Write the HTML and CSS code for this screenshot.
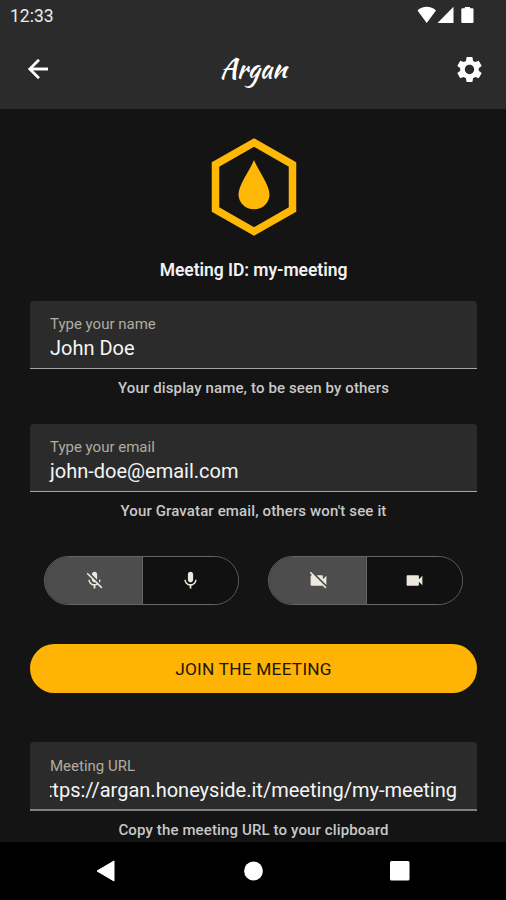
FILE: index.html
```html
<!DOCTYPE html>
<html lang="en">
<head>
<meta charset="utf-8">
<title>Argan</title>
<link rel="stylesheet" href="styles.css">
</head>
<body>
<div class="screen">
  <header class="top">
    <div class="status">
      <span class="clock">12:33</span>
      <svg class="indicators" width="58" height="20" viewBox="0 0 58 20" fill="#fff">
        <path d="M0.5 5.500C3 3 6.200 1.800 9.700 1.800S16.400 3 19 5.500L9.700 18Z"/>
        <path d="M20.500 18 36.500 1.800V18Z"/>
        <path d="M45.500 3.300H47.800V2H53V3.300H55.500Q56.500 3.300 56.500 4.500V17Q56.500 18 55.500 18H45.500Q44.300 18 44.300 17V4.500Q44.300 3.300 45.500 3.300Z"/>
      </svg>
    </div>
    <div class="appbar">
      <svg class="back" viewBox="4 4 16 16" fill="#fff" stroke="#fff" stroke-width=".3"><path d="M20 11H7.830l5.590-5.590L12 4l-8 8 8 8 1.410-1.410L7.830 13H20z"/></svg>
      <h1 class="brand">Argan</h1>
      <svg class="gear" viewBox="0 0 24 24" fill="#fff"><path d="M19.140 12.940c.04-.3.060-.61.060-.94 0-.32-.02-.64-.07-.94l2.030-1.580c.18-.14.230-.41.120-.61l-1.920-3.320c-.12-.22-.37-.29-.59-.22l-2.390.96c-.5-.38-1.030-.7-1.620-.94l-.36-2.540c-.04-.24-.24-.41-.48-.41h-3.840c-.24 0-.43.170-.47.410l-.36 2.540c-.59.240-1.130.570-1.620.940l-2.390-.96c-.22-.08-.47 0-.59.220L2.740 8.870c-.12.210-.08.470.120.610l2.030 1.580c-.05.300-.09.630-.09.940s.02.640.070.940l-2.030 1.580c-.18.140-.23.410-.12.610l1.920 3.320c.12.220.370.290.590.220l2.390-.96c.5.380 1.030.700 1.620.940l.36 2.540c.05.240.240.410.480.410h3.840c.24 0 .44-.17.470-.41l.36-2.540c.59-.24 1.130-.56 1.620-.94l2.390.96c.22.080.470 0 .59-.22l1.920-3.320c.12-.22.070-.47-.12-.61l-2.010-1.580zM12 15.600c-1.980 0-3.600-1.620-3.600-3.600s1.620-3.600 3.600-3.600 3.600 1.620 3.600 3.600-1.620 3.600-3.600 3.600z"/></svg>
    </div>
  </header>
  <main class="content">
    <svg class="logo" width="86" height="98" viewBox="0 0 86 98">
      <path d="M43 4.500 81.500 26.500V71.500L43 93.500 4.500 71.500V26.500Z" fill="none" stroke="#ffb805" stroke-width="7.500"/>
      <path d="M43 22C47.500 33 58.500 47 58.500 56.500A15.500 14.700 0 0 1 27.500 56.500C27.500 47 38.500 33 43 22Z" fill="#ffb805"/>
    </svg>
    <h2 class="meeting-id">Meeting ID: my-meeting</h2>
    <div class="field">
      <label class="label label-name">Type your name</label>
      <div class="value value-name">John Doe</div>
    </div>
    <p class="helper helper-name">Your display name, to be seen by others</p>
    <div class="field">
      <label class="label label-email">Type your email</label>
      <div class="value value-email">john-doe@email.com</div>
    </div>
    <p class="helper helper-email">Your Gravatar email, others won't see it</p>
    <div class="toggles">
      <div class="toggle">
        <div class="option selected"><svg viewBox="0 0 24 24"><path d="M19 11h-1.700c0 .74-.16 1.430-.43 2.050l1.230 1.230c.56-.98.900-2.090.900-3.280zm-4.020.170c0-.06.020-.11.020-.17V5c0-1.660-1.340-3-3-3S9 3.340 9 5v.18l5.980 5.990zM4.270 3L3 4.270l6.010 6.010V11c0 1.660 1.330 3 2.990 3 .22 0 .44-.03.650-.08l1.660 1.660c-.71.330-1.500.520-2.310.520-2.760 0-5.300-2.100-5.300-5.100H5c0 3.410 2.720 6.230 6 6.720V21h2v-3.280c.91-.13 1.770-.45 2.540-.9L19.730 21 21 19.730 4.270 3z"/></svg></div>
        <div class="option"><svg viewBox="0 0 24 24"><path d="M12 14c1.660 0 3-1.340 3-3V5c0-1.660-1.340-3-3-3S9 3.340 9 5v6c0 1.660 1.340 3 3 3zm5.300-3c0 3-2.540 5.100-5.300 5.100S6.700 14 6.700 11H5c0 3.410 2.720 6.230 6 6.720V21h2v-3.280c3.280-.48 6-3.300 6-6.720h-1.700z"/></svg></div>
      </div>
      <div class="toggle">
        <div class="option selected"><svg viewBox="0 0 24 24"><path d="M21 6.500l-4 4V7c0-.55-.45-1-1-1H9.820L21 17.180V6.500zM3.270 2L2 3.270 4.730 6H4c-.55 0-1 .45-1 1v10c0 .55.450 1 1 1h12c.21 0 .39-.08.540-.18L19.730 21 21 19.730 3.270 2z"/></svg></div>
        <div class="option"><svg viewBox="0 0 24 24"><path d="M17 10.500V7c0-.55-.45-1-1-1H4c-.55 0-1 .45-1 1v10c0 .55.450 1 1 1h12c.55 0 1-.45 1-1v-3.500l4 4v-11l-4 4z"/></svg></div>
      </div>
    </div>
    <button class="join">JOIN THE MEETING</button>
    <div class="field field-url">
      <label class="label label-url">Meeting URL</label>
      <div class="value value-url"><span>https://argan.honeyside.it/meeting/my-meeting</span></div>
    </div>
    <p class="helper helper-url">Copy the meeting URL to your clipboard</p>
  </main>
  <nav class="navbar">
    <svg width="20" height="22" viewBox="0 0 20 22"><path d="M18 1V21L1 11Z" fill="#fff" stroke="#fff" stroke-linejoin="round"/></svg>
    <svg width="20" height="20" viewBox="0 0 20 20"><circle cx="10.500" cy="10" r="9.400" fill="#fff"/></svg>
    <svg width="20" height="20" viewBox="0 0 20 20"><rect width="19.500" height="19.500" rx="1.500" fill="#fff"/></svg>
  </nav>
</div>
</body>
</html>
```
FILE: styles.css
```css
* { box-sizing: border-box; margin: 0; padding: 0; }
body { background: #141414; font-family: Roboto, "Liberation Sans", sans-serif; color: #fff; }
.screen { width: 506px; height: 900px; display: flex; flex-direction: column; overflow: hidden; }
svg { display: block; flex: none; }

.top { height: 109px; flex: none; background: #2b2b2b; }
.status { height: 32px; padding: 0 31px 0 10px; display: flex; justify-content: space-between; align-items: center; }
.clock { font-size: 17.5px; line-height: 32px; color: #ececec; }
.indicators { margin-top: -2px; }
.appbar { height: 74px; padding: 0 21px 0 28px; display: grid; grid-template-columns: 60px 1fr 66px; align-items: center; }
.back { width: 20px; height: 20px; }
.brand { font: 400 27px/40px "Kaushan Script", cursive; text-align: center; }
.gear { width: 31px; height: 31px; justify-self: end; }

.content { flex: 1; min-height: 0; padding: 29px 29px 0 30px; overflow: hidden; display: flex; flex-direction: column; }
.logo { align-self: center; }
.meeting-id { margin: 22px 0 19px; height: 24px; font-size: 17.5px; line-height: 24px; font-weight: 600; letter-spacing: -.05px; text-align: center; color: #f1f1f1; }
.field { height: 68px; flex: none; padding: 14px 20px 0; background: #2b2b2b; border-bottom: 1px solid #a5a5a5; border-radius: 4px 4px 0 0; }
.label { display: block; height: 18px; font-size: 15px; line-height: 18px; color: #b1aca0; }
.value { height: 30px; font-size: 20px; line-height: 31px; color: #f5f5f5; white-space: nowrap; }
.helper { flex: none; height: 20px; margin: 9px 0 26px; font-size: 15px; line-height: 20px; font-weight: 500; letter-spacing: .13px; text-align: center; color: #c8c8c8; }
.helper-email { margin-bottom: 35px; }

.toggles { flex: none; display: flex; gap: 29px; padding-left: 14px; }
.toggle { width: 195px; height: 49px; display: flex; border: 1px solid #666; border-radius: 25px; overflow: hidden; }
.option { flex: 1; display: flex; align-items: center; justify-content: center; background: #111; }
.selected { flex: 0 0 98px; padding-left: 1px; background: #4d4d4d; border-right: 1px solid #666; }
.option svg { width: 21px; height: 21px; fill: #ece8de; }

.join { flex: none; height: 49px; margin: 39px 0 49px; padding-top: 2px; border: 0; border-radius: 25px; background: #ffb305; color: #211700; font: 400 17.3px/47px Roboto, sans-serif; letter-spacing: .22px; }
.field-url { height: 69px; padding-top: 15px; border-bottom: 2px solid #808080; }
.value-url { display: flex; justify-content: flex-end; overflow: hidden; letter-spacing: .01px; }
.helper-url { margin-top: 9px; margin-bottom: 0; }

.navbar { height: 58px; flex: none; padding: 0 96px; display: flex; justify-content: space-between; align-items: center; background: #000; }
```
